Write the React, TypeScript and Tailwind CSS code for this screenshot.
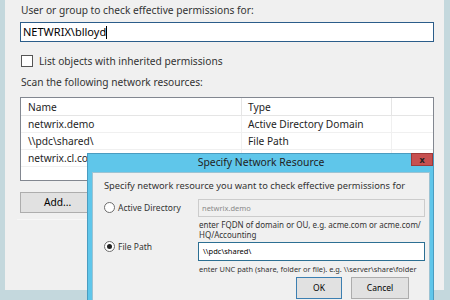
import React from 'react';

const rows = [
  { name: 'netwrix.demo', type: 'Active Directory Domain' },
  { name: '\\\\pdc\\shared\\', type: 'File Path' },
  { name: 'netwrix.cl.com', type: '' },
];

function Radio({ checked }: { checked?: boolean }) {
  return (
    <span className="w-[11px] h-[11px] rounded-full border border-[#6d6d6d] bg-white flex items-center justify-center shrink-0">
      {checked && <span className="w-[5px] h-[5px] rounded-full bg-[#222]" />}
    </span>
  );
}

export default function App() {
  return (
    <div
      className="relative w-[450px] h-[300px] overflow-hidden bg-[#c4d8dd] text-[#333]"
      style={{ fontFamily: '"Noto Sans", "Open Sans", sans-serif' }}
    >
      {/* Main panel */}
      <div className="ml-[5px] w-[439px] h-[290px] bg-[#f0f0f0] pl-[15px] pr-[10px] pt-[2px] flex flex-col">
        <div className="text-[10.2px] leading-[16px] pl-[1px]">User or group to check effective permissions for:</div>
        <div className="mt-[4px] h-[20px] border border-[#2b5d8a] bg-white flex items-center pl-[2px] text-[11px] text-black">
          NETWRIX\blloyd<span className="w-px h-[13px] bg-black" />
        </div>

        <div className="mt-[11px] flex items-center gap-[6px] pl-[1px]">
          <span className="w-[12px] h-[12px] border border-[#555] bg-white" />
          <span className="text-[10.2px] leading-[16px]">List objects with inherited permissions</span>
        </div>

        <div className="mt-[5px] text-[10.2px] leading-[16px] pl-[1px]">Scan the following network resources:</div>

        {/* List view */}
        <div className="mt-[7px] h-[84px] border border-[#828790] bg-white text-[10.2px] text-[#1e1e1e]">
          <div className="flex h-[18px] border-b border-[#e5e5e5]">
            <div className="w-[221px] pl-[7px] border-r border-[#e5e5e5] leading-[18px]">Name</div>
            <div className="w-[150px] pl-[6px] border-r border-[#e5e5e5] leading-[18px]">Type</div>
            <div className="flex-1" />
          </div>
          {rows.map((r) => (
            <div key={r.name} className="flex h-[17px] border-b border-[#f0f0f0]">
              <div className="w-[221px] pl-[7px] border-r border-[#f0f0f0] leading-[17px]">{r.name}</div>
              <div className="w-[150px] pl-[6px] border-r border-[#f0f0f0] leading-[17px]">{r.type}</div>
              <div className="flex-1" />
            </div>
          ))}
        </div>

        <div className="mt-[11px] w-[75px] h-[21px] border border-[#adadad] bg-[#e1e1e1] text-[10.2px] text-black flex items-center justify-center">
          Add...
        </div>
        <div className="mt-[6px] h-px w-[70px] -ml-[3px] bg-[#f7f7f7]" />
      </div>

      {/* Dialog */}
      <div className="absolute left-[87px] top-[153px] w-[347px] h-[160px] bg-[#5fc6ea] border border-[#4a9cc0] pl-[4px] pr-[3px] flex flex-col">
        <div className="relative h-[18px] flex items-center justify-center text-[10.4px] text-[#222]">
          Specify Network Resource
          <div className="absolute right-[-3px] top-[-1px] w-[22px] h-[13px] bg-[#c75050] border border-[#9e3a3a] flex items-center justify-center text-[9px] font-bold text-[#222] leading-none">
            x
          </div>
        </div>
        <div className="flex-1 bg-[#f0f0f0] border border-[#9cc3d3] pl-[11px] pr-[4px] pt-[6px] text-[#333]">
          <div className="text-[9.3px] leading-[14px] whitespace-nowrap">Specify network resource you want to check effective permissions for</div>

          <div className="mt-[6px] flex">
            <div className="w-[94px] shrink-0 flex items-start gap-[3px] pt-[3px]">
              <Radio />
              <span className="text-[8.5px] leading-[11px]">Active Directory</span>
            </div>
            <div className="flex-1 min-w-0">
              <div className="h-[18px] border border-[#cccccc] bg-[#f0f0f0] pl-[3px] text-[7.5px] leading-[16px] text-[#8a8a8a]">netwrix.demo</div>
              <div className="mt-[3px] text-[8px] leading-[10px] pl-[1px]">
                enter FQDN of domain or OU, e.g. acme.com or acme.com/
                <br />
                HQ/Accounting
              </div>
            </div>
          </div>

          <div className="mt-[2px] flex">
            <div className="w-[94px] shrink-0 flex items-start gap-[3px] -mt-[1px]">
              <Radio checked />
              <span className="text-[8.5px] leading-[11px]">File Path</span>
            </div>
            <div className="flex-1 min-w-0">
              <div className="h-[19px] border border-[#2c6f93] bg-white pl-[4px] text-[7.5px] leading-[17px] text-black">\\pdc\shared\</div>
              <div className="mt-[3px] text-[7.4px] leading-[10px] pl-[1px] whitespace-nowrap">enter UNC path (share, folder or file). e.g. \\server\share\folder</div>
            </div>
          </div>

          <div className="mt-[3px] flex justify-end gap-[9px] pr-[16px] text-[8.5px] text-black">
            <div className="w-[46px] h-[22px] border border-[#3c7fb1] bg-[#e1e1e1] flex items-center justify-center">OK</div>
            <div className="w-[58px] h-[22px] border border-[#adadad] bg-[#e1e1e1] flex items-center justify-center">Cancel</div>
          </div>
        </div>
      </div>
    </div>
  );
}
